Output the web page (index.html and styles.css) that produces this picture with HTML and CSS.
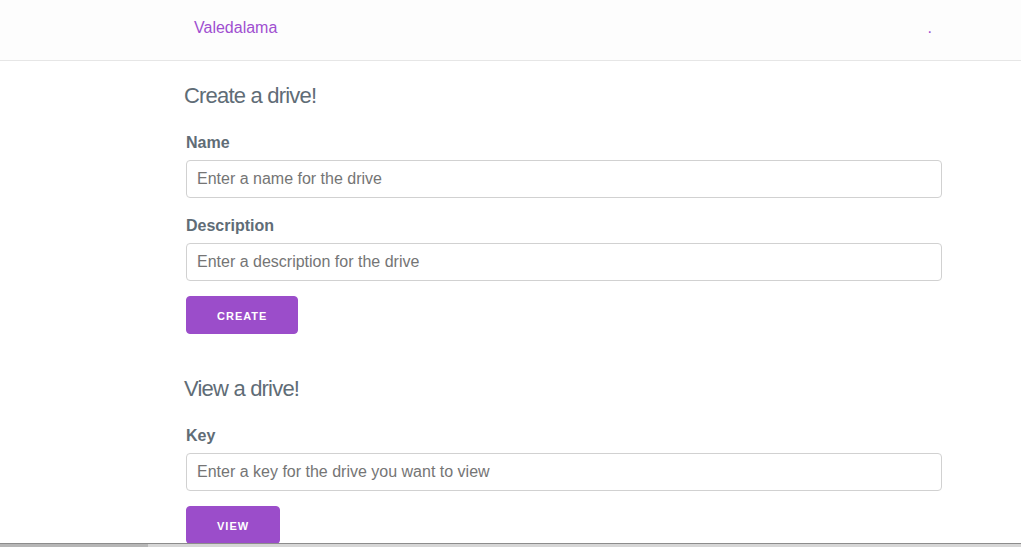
FILE: index.html
```html
<!DOCTYPE html>
<html>
<head>
<meta charset="utf-8">
<title>Valedalama</title>
<link rel="stylesheet" href="styles.css">
</head>
<body>
<nav class="nav">
  <div class="nav-inner">
    <a class="brand" href="#">Valedalama</a>
    <span class="nav-dot">.</span>
  </div>
</nav>
<main class="container">
  <section class="section">
    <h4 class="title">Create a drive!</h4>
    <form class="form">
      <label class="label" for="name">Name</label>
      <input class="input" id="name" type="text" placeholder="Enter a name for the drive">
      <label class="label" for="desc">Description</label>
      <input class="input" id="desc" type="text" placeholder="Enter a description for the drive">
      <button class="button" type="button">Create</button>
    </form>
  </section>
  <section class="section second">
    <h4 class="title">View a drive!</h4>
    <form class="form">
      <label class="label" for="key">Key</label>
      <input class="input" id="key" type="text" placeholder="Enter a key for the drive you want to view">
      <button class="button" type="button">View</button>
    </form>
  </section>
</main>
<div class="hscroll"><div class="hscroll-thumb"></div></div>
</body>
</html>
```
FILE: styles.css
```css
html, body {
  margin: 0;
  padding: 0;
}
body {
  font-family: "Liberation Sans", Arial, sans-serif;
  font-size: 16px;
  color: #606c76;
  background: #ffffff;
  overflow: hidden;
  height: 547px;
}
.nav {
  height: 60px;
  background: #fdfdfd;
  border-bottom: 1px solid #e6e6e6;
}
.nav-inner {
  display: flex;
  justify-content: space-between;
  align-items: center;
  height: 60px;
  padding: 0 89px 0 194px;
  line-height: 1;
}
.brand {
  color: #a04fd0;
  text-decoration: none;
  font-size: 16px;
  position: relative;
  top: -2px;
}
.nav-dot {
  color: #a04fd0;
  font-size: 16px;
  position: relative;
  top: -2px;
}
.container {
  padding: 20px 79px 0 186px;
}
.section.second {
  margin-top: 29.5px;
}
.title {
  margin: 0 0 19.5px -2px;
  font-size: 22px;
  font-weight: 400;
  line-height: 1.35;
  letter-spacing: -0.8px;
  color: #606c76;
}
.form {
  margin: 0;
  display: flex;
  flex-direction: column;
  align-items: flex-start;
}
.label {
  display: block;
  font-weight: 700;
  font-size: 16px;
  line-height: 25px;
  margin-bottom: 5px;
  color: #606c76;
}
.input {
  box-sizing: border-box;
  width: 756px;
  height: 38px;
  margin: 0 0 15px 0;
  padding: 6px 10px;
  border: 1px solid #d1d1d1;
  border-radius: 4px;
  background: transparent;
  font-family: "Liberation Sans", Arial, sans-serif;
  font-size: 16px;
  color: #606c76;
  outline: none;
}
.input::placeholder {
  color: #757575;
  opacity: 1;
}
.button {
  box-sizing: border-box;
  height: 38px;
  padding: 0 30px;
  margin: 0 0 10px 0;
  border: 1px solid #9b4dca;
  border-radius: 4px;
  background: #9b4dca;
  color: #ffffff;
  font-family: "Liberation Sans", Arial, sans-serif;
  font-size: 11px;
  font-weight: 700;
  letter-spacing: 1px;
  text-transform: uppercase;
  line-height: 38px;
  cursor: pointer;
}
.hscroll {
  position: fixed;
  left: 0;
  right: 0;
  bottom: 0;
  height: 3px;
  border-top: 1px solid #8c8c8c;
  background: #d6d6d6;
}
.hscroll-thumb {
  width: 148px;
  height: 3px;
  background: #b6b6b6;
}
```
